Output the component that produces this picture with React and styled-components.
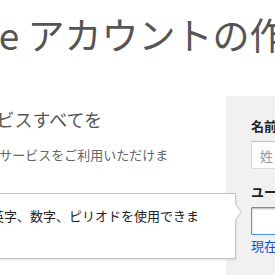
import styled, { createGlobalStyle } from "styled-components";

const GlobalStyle = createGlobalStyle`
  html, body {
    margin: 0;
    padding: 0;
    background: #ffffff;
    overflow: hidden;
  }
  body {
    font-family: "Noto Sans CJK JP", "Liberation Sans", Arial, sans-serif;
    color: #222;
  }
`;

// the screenshot is a crop, so the page is shifted left
const Page = styled.div`
  margin-left: -100px;
  width: 420px;
  height: 275px;
`;

const Title = styled.h1`
  margin: 15px 0 0 -3px;
  font-size: 37px;
  line-height: 38px;
  font-weight: 400;
  color: #555;
  white-space: nowrap;
`;

const Main = styled.div`
  display: flex;
  align-items: flex-start;
  gap: 51px;
  margin-top: 43px;
`;

const Intro = styled.div`
  width: 275px;
  flex-shrink: 0;
`;

const Heading = styled.h2`
  margin: 11px 0 0 -3px;
  font-size: 18px;
  line-height: 24px;
  font-weight: 400;
  color: #555;
  white-space: nowrap;
`;

const Lead = styled.p`
  margin: 15px 0 0;
  font-size: 13px;
  line-height: 18px;
  color: #666;
`;

const Panel = styled.div`
  flex: 1;
  min-height: 200px;
  background: #f1f1f1;
  padding: 21px 25px 0;
`;

const Field = styled.div`
  margin-bottom: ${(p) => p.$gap || 14}px;
`;

const Label = styled.div`
  font-size: 13px;
  line-height: 18px;
  font-weight: 700;
  color: #222;
  white-space: nowrap;
  margin-bottom: 6px;
`;

const Row = styled.div`
  display: flex;
  gap: 10px;
`;

const InputWrap = styled.div`
  position: relative;
`;

const Input = styled.input`
  box-sizing: border-box;
  width: ${(p) => p.$width || 200}px;
  height: 28px;
  padding: 0 8px;
  font-family: inherit;
  font-size: 13px;
  background: #fff;
  border: 1px solid ${(p) => (p.$focus ? "#4d90fe" : "#d9d9d9")};
  border-top-color: ${(p) => (p.$focus ? "#4d90fe" : "#c0c0c0")};
  box-shadow: ${(p) => (p.$focus ? "inset 0 1px 2px rgba(0,0,0,0.3)" : "none")};
  border-radius: 1px;
  outline: none;
  &::placeholder {
    color: #999;
  }
`;

const Link = styled.a`
  display: block;
  margin-top: 2px;
  font-size: 13px;
  line-height: 18px;
  color: #1155cc;
  text-decoration: none;
  white-space: nowrap;
`;

const Bubble = styled.div`
  position: absolute;
  top: -14px;
  right: calc(100% + 15px);
  width: 255px;
  padding: 13px 15px 15px;
  background: #fff;
  border: 1px solid #c4c4c4;
  box-shadow: 0 1px 2px rgba(0, 0, 0, 0.12);
  font-size: 13px;
  line-height: 18px;
  color: #222;

  &::before,
  &::after {
    content: "";
    position: absolute;
    top: 9px;
    width: 0;
    height: 0;
    border-style: solid;
  }
  &::before {
    right: -7px;
    border-width: 9px 0 9px 7px;
    border-color: transparent transparent transparent #c4c4c4;
  }
  &::after {
    right: -6px;
    border-width: 9px 0 9px 7px;
    border-color: transparent transparent transparent #fff;
  }
`;

export default function App() {
  return (
    <>
      <GlobalStyle />
      <Page>
        <Title>Google アカウントの作成</Title>
        <Main>
          <Intro>
            <Heading>Google サービスすべてを</Heading>
            <Lead>すべての Google サービスをご利用いただけます。</Lead>
          </Intro>
          <Panel>
            <Field>
              <Label>名前</Label>
              <Row>
                <Input $width={120} placeholder="姓" />
                <Input $width={120} placeholder="名" />
              </Row>
            </Field>
            <Field $gap={17}>
              <Label>ユーザー名を選択</Label>
              <InputWrap>
                <Input $focus $width={250} />
                <Bubble>半角英字、数字、ピリオドを使用できます。</Bubble>
              </InputWrap>
              <Link href="#">現在のメールアドレスを使用</Link>
            </Field>
            <Field>
              <Label>パスワードを作成</Label>
            </Field>
          </Panel>
        </Main>
      </Page>
    </>
  );
}
